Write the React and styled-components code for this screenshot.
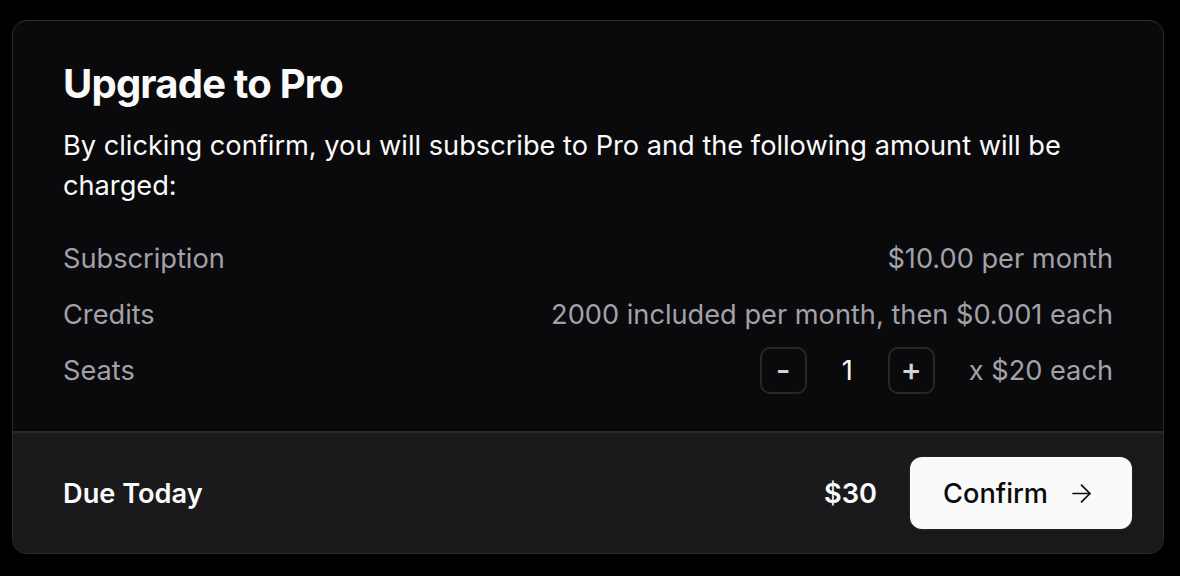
import React, { useState } from "react";
import styled, { createGlobalStyle } from "styled-components";
import { ArrowRight } from "lucide-react";

//-----------------------------------------------------------------------------------------------

const GlobalStyle = createGlobalStyle`
	* {
		box-sizing: border-box;
	}
	body {
		margin: 0;
		background: #000000;
		font-family: Inter, "Noto Sans", "Liberation Sans", sans-serif;
		-webkit-font-smoothing: antialiased;
	}
`;

const Page = styled.main`
	padding: 20px 16px 23px 12px;
`;

const Card = styled.article`
	width: 1152px;
	background: #0a0a0c;
	border: 1px solid #2a2a2d;
	border-radius: 14px;
	overflow: hidden;
`;

const CardBody = styled.section`
	display: flex;
	flex-direction: column;
	padding: 43px 50px 37px 50px;
`;

const Title = styled.h2`
	margin: 0;
	font-size: 40px;
	line-height: 40px;
	font-weight: 700;
	letter-spacing: -0.02em;
	color: #fafafa;
`;

const Description = styled.p`
	margin: 22px 0 0 0;
	font-size: 27.2px;
	line-height: 40px;
	color: #fafafa;
`;

const Lines = styled.ul`
	list-style: none;
	margin: 28px 0 0 0;
	padding: 0;
	display: flex;
	flex-direction: column;
	gap: 8px;
`;

const Line = styled.li`
	display: flex;
	align-items: center;
	justify-content: space-between;
	min-height: 48px;
	font-size: 27.2px;
	color: #a1a1aa;
`;

const Stepper = styled.div`
	display: flex;
	align-items: center;
	gap: 34px;
`;

const Controls = styled.div`
	display: flex;
	align-items: center;
	gap: 24px;
`;

const StepButton = styled.button`
	width: 47px;
	height: 47px;
	display: flex;
	align-items: center;
	justify-content: center;
	padding: 0 0 2px 0;
	background: transparent;
	border: 2px solid #27272a;
	border-radius: 10px;
	color: #d4d4d8;
	font-family: inherit;
	font-size: 32px;
	font-weight: 500;
	cursor: pointer;
`;

const Count = styled.span`
	width: 33px;
	text-align: center;
	color: #fafafa;
	font-size: 27.2px;
`;

const Footer = styled.footer`
	display: flex;
	align-items: center;
	justify-content: space-between;
	padding: 24px 31px 24px 50px;
	background: #1a1a1c;
	border-top: 2px solid #2a2a2d;
`;

const FooterLabel = styled.span`
	font-size: 27.2px;
	font-weight: 600;
	color: #fafafa;
`;

const FooterRight = styled.div`
	display: flex;
	align-items: center;
	gap: 33px;
`;

const Total = styled.span`
	font-size: 27.2px;
	font-weight: 600;
	color: #fafafa;
`;

const Confirm = styled.button`
	display: flex;
	align-items: center;
	gap: 19px;
	height: 72px;
	padding: 0 36px 0 33px;
	background: #fafafa;
	border: none;
	border-radius: 12px;
	color: #0a0a0a;
	font-family: inherit;
	font-size: 27.2px;
	font-weight: 500;
	box-shadow: 0 2px 4px rgba(0, 0, 0, 0.5), 0 1px 3px rgba(255, 255, 255, 0.2);
	cursor: pointer;
`;

//-----------------------------------------------------------------------------------------------

const SEAT_PRICE = 20;
const BASE_PRICE = 10;

export default function App() {
	const [seats, setSeats] = useState(1);

	return (
		<>
			<GlobalStyle />
			<Page>
				<Card>
					<CardBody>
						<Title>Upgrade to Pro</Title>
						<Description>
							By clicking confirm, you will subscribe to Pro and the following
							amount will be charged:
						</Description>
						<Lines>
							<Line>
								<span>Subscription</span>
								<span>$10.00 per month</span>
							</Line>
							<Line>
								<span>Credits</span>
								<span>2000 included per month, then $0.001 each</span>
							</Line>
							<Line>
								<span>Seats</span>
								<Stepper>
									<Controls>
										<StepButton onClick={() => setSeats(Math.max(1, seats - 1))}>
											-
										</StepButton>
										<Count>{seats}</Count>
										<StepButton onClick={() => setSeats(seats + 1)}>+</StepButton>
									</Controls>
									<span>x ${SEAT_PRICE} each</span>
								</Stepper>
							</Line>
						</Lines>
					</CardBody>
					<Footer>
						<FooterLabel>Due Today</FooterLabel>
						<FooterRight>
							<Total>${BASE_PRICE + seats * SEAT_PRICE}</Total>
							<Confirm>
								Confirm
								<ArrowRight size={29} strokeWidth={1.4} />
							</Confirm>
						</FooterRight>
					</Footer>
				</Card>
			</Page>
		</>
	);
}
